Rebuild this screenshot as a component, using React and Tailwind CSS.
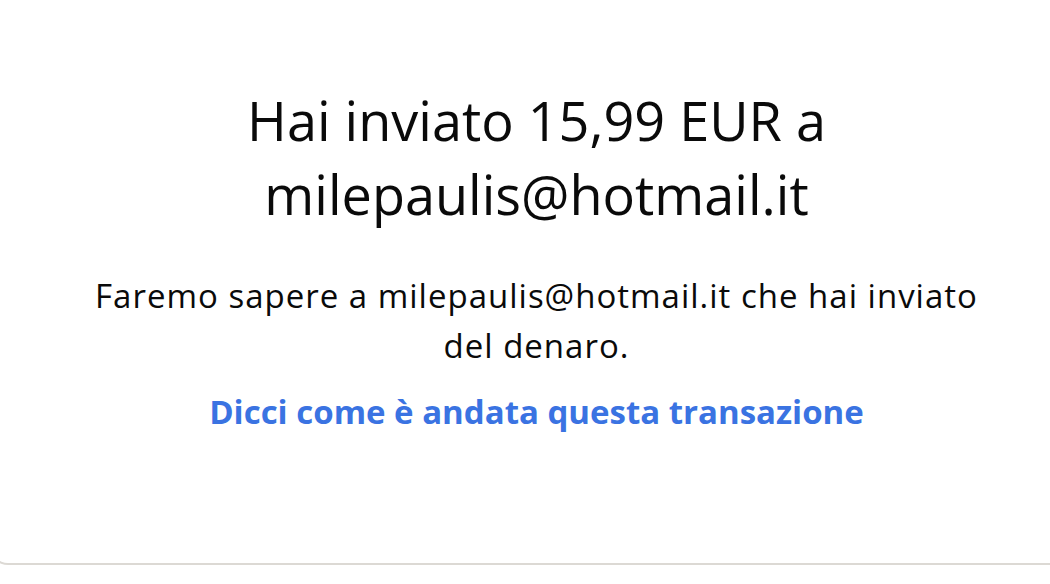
import React from "react";

const App = () => {
  return (
    <div className="relative h-[584px] w-[1050px] overflow-hidden bg-white font-['Open_Sans',sans-serif]">
      {/* Card, cropped on the sides */}
      <div className="ml-[-10px] h-[565px] w-[1093px] rounded-b-[18px] border-x border-b-2 border-[#dcd9d4] bg-white">
        <div className="flex flex-col items-center px-10 pt-[83px] text-center">
          <h1 className="text-[54px] leading-[74px] font-normal text-[#0a0a0a]">
            Hai inviato 15,99 EUR a
            <br />
            milepaulis@hotmail.it
          </h1>
          <p className="mt-[40px] w-[900px] text-[33px] leading-[50px] tracking-[1px] text-[#0a0a0a]">
            Faremo sapere a milepaulis@hotmail.it che hai inviato del denaro.
          </p>
          <a
            href="#"
            className="mt-[16px] text-[33px] leading-[50px] font-bold text-[#3a73e2]"
          >
            Dicci come è andata questa transazione
          </a>
        </div>
      </div>
    </div>
  );
};

export default App;
